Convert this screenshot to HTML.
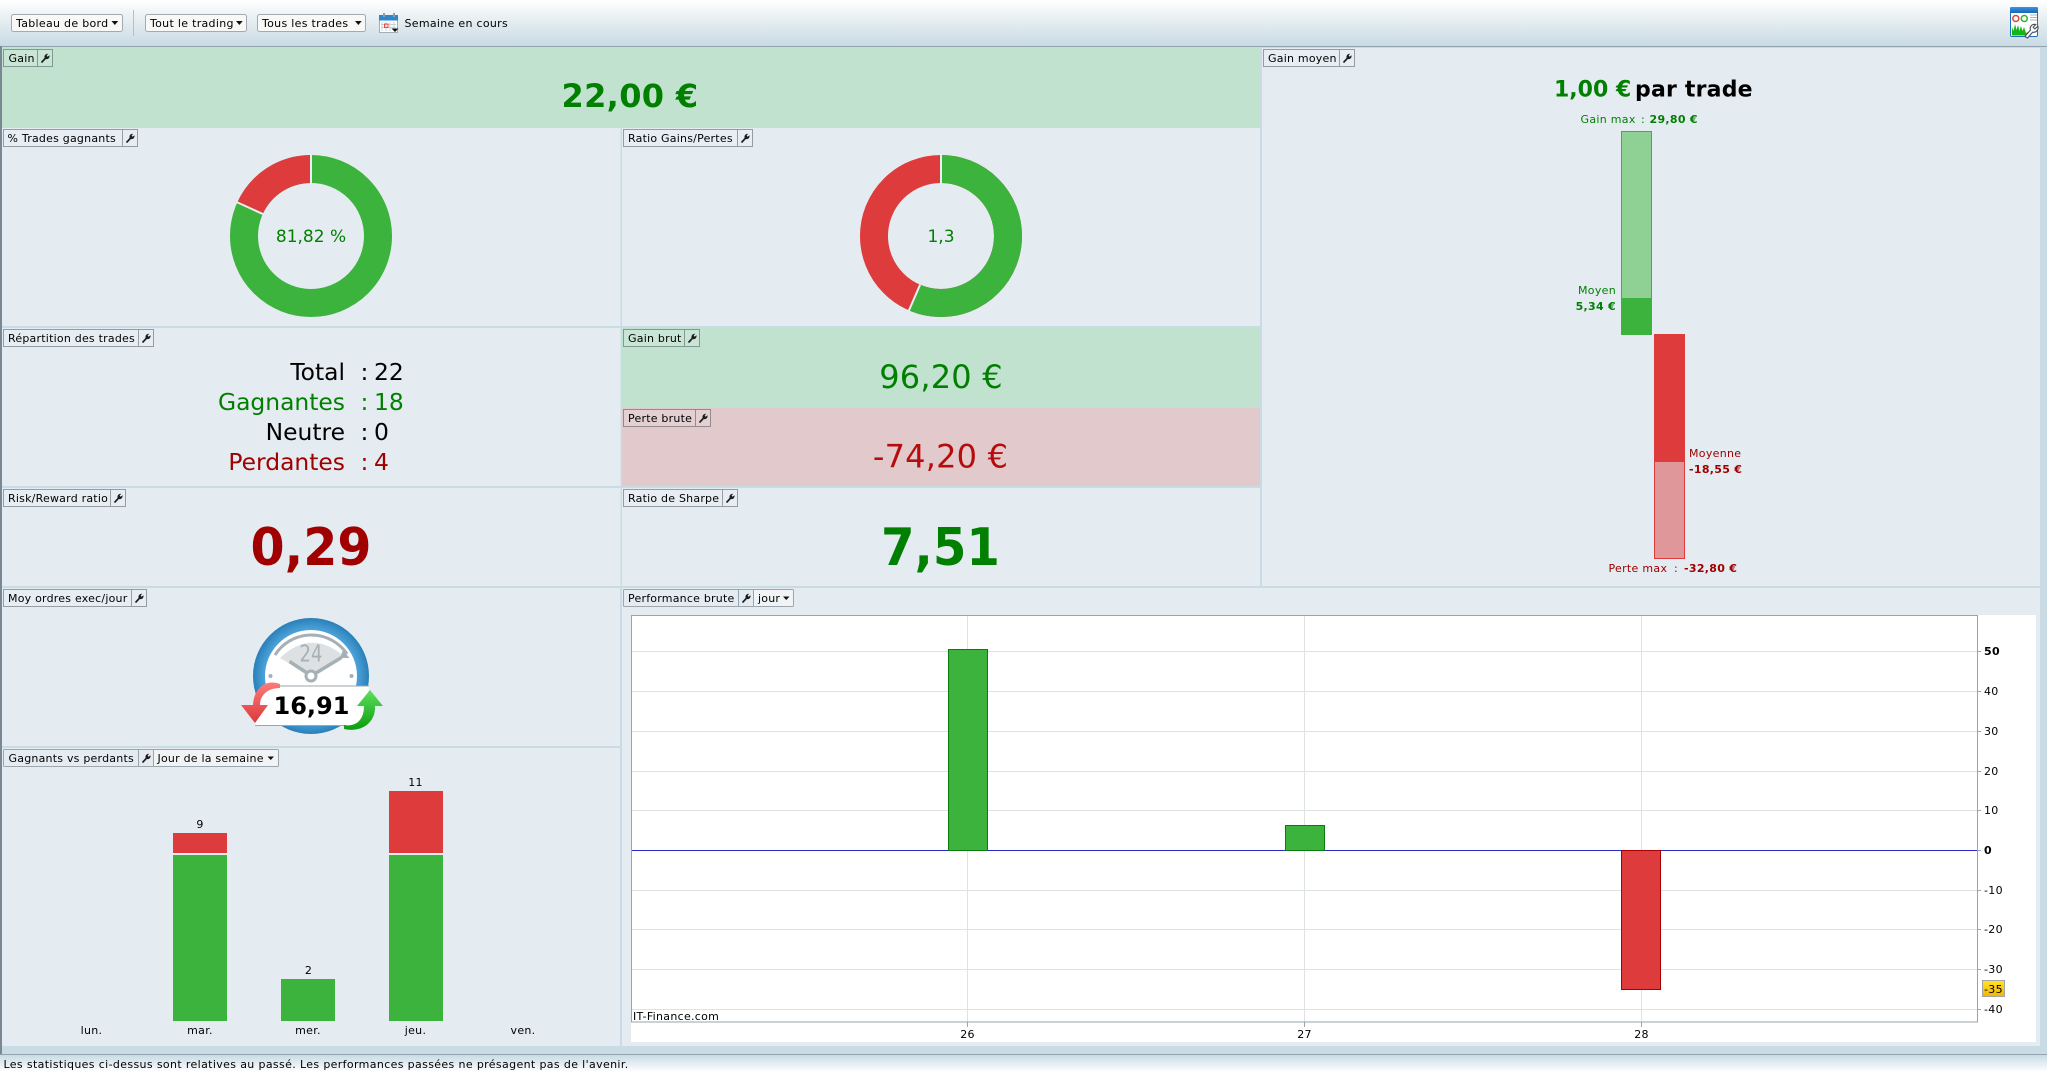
<!DOCTYPE html>
<html><head><meta charset="utf-8"><style>
html,body{margin:0;padding:0;background:#c9dbe5;width:2047px;height:1072px;overflow:hidden}
svg{display:block;position:absolute;left:0;top:0}
text{font-family:"DejaVu Sans","Liberation Sans",sans-serif;font-size:11px;fill:#000;letter-spacing:.3px}
.h{letter-spacing:.22px}
.b{font-weight:bold}.g{fill:#007f00}.r{fill:#a00000}
.m{text-anchor:middle}.e{text-anchor:end}
.n{letter-spacing:0}
.rp{font-size:23.4px;letter-spacing:0}
.hb{fill:rgba(255,255,255,.12);stroke:rgba(50,60,65,.45);stroke-width:1}
.hl{stroke:rgba(50,60,65,.45);stroke-width:1}
.dd{fill:#f1f4f6;stroke:#9ca6ac;stroke-width:1}
.gl{stroke:#dfe2e2;stroke-width:1}
.tk{stroke:#96a4ac;stroke-width:1}
</style></head><body>
<svg width="2047" height="1072" viewBox="0 0 2047 1072" xmlns="http://www.w3.org/2000/svg">
<defs>
<linearGradient id="top" x1="0" y1="0" x2="0" y2="1"><stop offset="0" stop-color="#fff"/><stop offset=".55" stop-color="#e0eaee"/><stop offset="1" stop-color="#c9dbe5"/></linearGradient>
<linearGradient id="bot" x1="0" y1="0" x2="0" y2="1"><stop offset="0" stop-color="#c9dbe5"/><stop offset="1" stop-color="#fff"/></linearGradient>
<linearGradient id="yel" x1="0" y1="0" x2="0" y2="1"><stop offset="0" stop-color="#ffe428"/><stop offset="1" stop-color="#f4b400"/></linearGradient>
<radialGradient id="ring" cx=".5" cy=".5" r=".5"><stop offset=".78" stop-color="#4fa6dc"/><stop offset="1" stop-color="#2a7fb8"/></radialGradient>
<linearGradient id="ra" x1="0" y1="0" x2="0" y2="1"><stop offset="0" stop-color="#ff7a7a"/><stop offset="1" stop-color="#dc3a3a"/></linearGradient>
<linearGradient id="ga" x1="0" y1="0" x2="0" y2="1"><stop offset="0" stop-color="#5fe05f"/><stop offset="1" stop-color="#0c9c0c"/></linearGradient>
<linearGradient id="blu" x1="0" y1="0" x2="0" y2="1"><stop offset="0" stop-color="#3d92e0"/><stop offset="1" stop-color="#1566b8"/></linearGradient>
<symbol id="w" viewBox="0 0 10 10"><path d="M.8 9 L4.6 4.9 C4 2.6 5.6 .6 8.2 .8 L6.6 2.6 L7.6 3.8 L9.5 2.2 C9.9 4.9 7.9 6.6 5.9 6 L2.2 10 Z" fill="#1c1c1c"/></symbol>
</defs>

<!-- frame -->
<rect x="0" y="0" width="2047" height="1072" fill="#c9dbe5"/>
<rect x="0" y="0" width="2047" height="46" fill="url(#top)"/>
<rect x="0" y="46" width="2047" height="1" fill="#93a3ad"/>
<rect x="0" y="46" width="2" height="1008" fill="#7a8893"/>
<rect x="0" y="1054" width="2047" height="1" fill="#93a3ad"/>
<rect x="0" y="1055" width="2047" height="17" fill="url(#bot)"/>

<!-- panels -->
<rect x="2" y="48" width="1258" height="79" fill="#c2e2d0"/>
<rect x="1262" y="48" width="778" height="538" fill="#e4ecf2"/>
<rect x="2" y="128" width="618.500" height="198" fill="#e4ecf2"/>
<rect x="622" y="128" width="638" height="198" fill="#e4ecf2"/>
<rect x="2" y="328" width="618.500" height="158" fill="#e4ecf2"/>
<rect x="622" y="328" width="638" height="109" fill="#c2e2d0"/>
<rect x="622" y="408" width="638" height="78" fill="#e1c9cc"/>
<rect x="2" y="488" width="618.500" height="98" fill="#e4ecf2"/>
<rect x="622" y="488" width="638" height="98" fill="#e4ecf2"/>
<rect x="2" y="588" width="618" height="158" fill="#e4ecf2"/>
<rect x="2" y="748" width="618" height="298" fill="#e4ecf2"/>
<rect x="622" y="588" width="1418" height="458" fill="#e4ecf2"/>

<!-- toolbar -->
<rect x="11.500" y="14.500" width="111" height="17" rx="2" fill="#f8f8f7" stroke="#a3abb0"/>
<text x="16" y="27">Tableau de bord</text><path d="M111.500 21h6.700l-3.350 4z" fill="#111"/>
<rect x="133" y="10" width="1" height="26" fill="#b4bfc6"/>
<rect x="145.500" y="14.500" width="101" height="17" rx="2" fill="#f8f8f7" stroke="#a3abb0"/>
<text x="150" y="27">Tout le trading</text><path d="M236 21h6.700l-3.350 4z" fill="#111"/>
<rect x="257.500" y="14.500" width="108" height="17" rx="2" fill="#f8f8f7" stroke="#a3abb0"/>
<text x="262" y="27">Tous les trades</text><path d="M355 21h6.700l-3.350 4z" fill="#111"/>
<!-- calendar -->
<rect x="379.500" y="15.500" width="18" height="17" fill="#fff" stroke="#a6aeb4"/>
<rect x="379" y="15" width="19" height="5.500" fill="#2f86cf"/>
<rect x="383" y="13" width="2" height="4" fill="#8aa0ad"/><rect x="393" y="13" width="2" height="4" fill="#8aa0ad"/>
<path d="M382 22v9M386 22v9M390 22v9M394 22v9M381 24.500h15M381 27.500h15" stroke="#c4d2dc" stroke-width="1" fill="none"/>
<rect x="384.500" y="24" width="3.500" height="3.500" fill="none" stroke="#e8483c"/>
<path d="M391.500 28.500h7l-3.500 3.500z" fill="#111"/>
<text x="404.500" y="27">Semaine en cours</text>
<!-- window icon -->
<rect x="2010.500" y="7.500" width="27" height="29" rx="1.500" fill="#fff" stroke="#1d6fc4"/>
<rect x="2010" y="7" width="28" height="6" rx="1.500" fill="url(#blu)"/>
<circle cx="2015.800" cy="18.500" r="3" fill="none" stroke="#e0403c" stroke-width="1.500"/>
<circle cx="2024.300" cy="18.500" r="3" fill="none" stroke="#2fb12f" stroke-width="1.500"/>
<path d="M2030 15h7M2030 17.500h7M2030 20h7" stroke="#a9b4bc"/>
<path d="M2012 35.500L2012 27 2013.500 31 2015 24 2016.500 30 2018 25 2019.500 31 2021 26 2022.500 31 2024 27 2026 33 2028 32V35.500Z" fill="#14b514"/>
<path d="M2024.800 36.500L2030.500 30C2029.300 26.800 2032 23.700 2035.800 24.400L2033.200 27.200 2034.800 29 2037.800 26.300C2038.900 30 2035.800 33 2032.600 32.200L2027.600 38Z" fill="#fff" stroke="#4a5258" stroke-width="1.100"/>

<!-- Gain -->
<rect class="hb" x="3.500" y="49.500" width="49" height="17"/><path class="hl" d="M37.500 50v16"/>
<text class="h" x="8.500" y="62">Gain</text><use href="#w" x="40" y="53" width="10" height="10"/>
<text class="b g m" x="630" y="107" style="font-size:32px;letter-spacing:.35px">22,00 €</text>

<!-- Gain moyen -->
<rect class="hb" x="1263.500" y="49.500" width="91" height="17"/><path class="hl" d="M1339.500 50v16"/>
<text class="h" x="1268" y="62">Gain moyen</text><use href="#w" x="1342" y="53" width="10" height="10"/>
<text class="b g n" x="1554" y="96.500" style="font-size:22px">1,00 €</text>
<text class="b" x="1635" y="96.500" style="font-size:22px;letter-spacing:.2px">par trade</text>
<text class="g" x="1580.500" y="123">Gain max</text><text class="g" x="1641" y="123">:</text><text class="g b" x="1649.500" y="123">29,80 €</text>
<rect x="1621" y="131" width="31" height="204" fill="#3cb33c"/>
<rect x="1622" y="132" width="29" height="166" fill="#8fd095"/>
<text class="g e" x="1616" y="294">Moyen</text>
<text class="g b e" x="1616" y="310">5,34 €</text>
<rect x="1654" y="334" width="31" height="225" fill="#de3c3c"/>
<rect x="1655" y="462" width="29" height="96" fill="#e09799"/>
<text class="r" x="1689" y="457">Moyenne</text>
<text class="r b" x="1689" y="473">-18,55 €</text>
<text class="r" x="1608.500" y="572">Perte max</text><text class="r" x="1674" y="572">:</text><text class="r b" x="1684" y="572">-32,80 €</text>

<!-- % trades gagnants -->
<rect class="hb" x="3.500" y="129.500" width="134" height="17"/><path class="hl" d="M122.500 130v16"/>
<text class="h" x="7.500" y="142">% Trades gagnants</text><use href="#w" x="125" y="133" width="10" height="10"/>
<circle cx="311" cy="236" r="67" fill="none" stroke="#3cb33c" stroke-width="28"/>
<circle cx="311" cy="236" r="67" fill="none" stroke="#de3c3c" stroke-width="28" pathLength="100" stroke-dasharray="18.18 81.82" transform="rotate(-155.450 311 236)"/>
<path d="M311 154V184M263.500 214.300L236.500 202" stroke="#e9eff3" stroke-width="2" fill="none"/>
<text class="g m n" x="311" y="242" style="font-size:17px">81,82 %</text>

<!-- ratio gains/pertes -->
<rect class="hb" x="623.500" y="129.500" width="129" height="17"/><path class="hl" d="M737.500 130v16"/>
<text class="h" x="628" y="142">Ratio Gains/Pertes</text><use href="#w" x="740" y="133" width="10" height="10"/>
<circle cx="941" cy="236" r="67" fill="none" stroke="#de3c3c" stroke-width="28"/>
<circle cx="941" cy="236" r="67" fill="none" stroke="#3cb33c" stroke-width="28" pathLength="100" stroke-dasharray="56.45 43.55" transform="rotate(-90 941 236)"/>
<path d="M941 154V184M920.100 284.700L908.700 311" stroke="#e9eff3" stroke-width="2" fill="none"/>
<text class="g m n" x="941" y="242" style="font-size:17px">1,3</text>

<!-- repartition -->
<rect class="hb" x="3.500" y="329.500" width="150" height="17"/><path class="hl" d="M138.500 330v16"/>
<text class="h" x="8" y="342">Répartition des trades</text><use href="#w" x="141" y="333" width="10" height="10"/>
<text class="e rp" x="345" y="380">Total</text><text class="rp" x="360.500" y="380">:</text><text class="rp" x="374" y="380">22</text>
<text class="e g rp" x="345" y="410">Gagnantes</text><text class="g rp" x="360.500" y="410">:</text><text class="g rp" x="374" y="410">18</text>
<text class="e rp" x="345" y="440">Neutre</text><text class="rp" x="360.500" y="440">:</text><text class="rp" x="374" y="440">0</text>
<text class="e r rp" x="345" y="470">Perdantes</text><text class="r rp" x="360.500" y="470">:</text><text class="r rp" x="374" y="470">4</text>

<!-- gain brut / perte brute -->
<rect class="hb" x="623.500" y="329.500" width="76" height="17"/><path class="hl" d="M684.500 330v16"/>
<text class="h" x="628" y="342">Gain brut</text><use href="#w" x="687" y="333" width="10" height="10"/>
<text class="g m" x="941" y="388" style="font-size:32px;letter-spacing:.2px">96,20 €</text>
<rect class="hb" x="623.500" y="409.500" width="87" height="17"/><path class="hl" d="M695.500 410v16"/>
<text class="h" x="628" y="422">Perte brute</text><use href="#w" x="698" y="413" width="10" height="10"/>
<text class="m" x="940.500" y="467.500" style="font-size:32px;letter-spacing:.2px;fill:#b80c0c">-74,20 €</text>

<!-- risk / sharpe -->
<rect class="hb" x="3.500" y="489.500" width="122" height="17"/><path class="hl" d="M110.500 490v16"/>
<text class="h" x="8" y="502">Risk/Reward ratio</text><use href="#w" x="113" y="493" width="10" height="10"/>
<text class="b r m n" x="311" y="565" textLength="121" lengthAdjust="spacingAndGlyphs" style="font-size:52px">0,29</text>
<rect class="hb" x="623.500" y="489.500" width="114" height="17"/><path class="hl" d="M722.500 490v16"/>
<text class="h" x="628" y="502">Ratio de Sharpe</text><use href="#w" x="725" y="493" width="10" height="10"/>
<text class="b g m n" x="940.500" y="565" textLength="119" lengthAdjust="spacingAndGlyphs" style="font-size:52px">7,51</text>

<!-- moy ordres -->
<rect class="hb" x="3.500" y="589.500" width="143" height="17"/><path class="hl" d="M131.500 590v16"/>
<text class="h" x="8" y="602">Moy ordres exec/jour</text><use href="#w" x="134" y="593" width="10" height="10"/>
<circle cx="311" cy="676" r="58" fill="url(#ring)"/>
<circle cx="311" cy="676" r="46" fill="#fff"/>
<path d="M280 658Q311 628 345 657L311 676Z" fill="#dde1e3"/>
<text class="m n" x="311" y="661.500" textLength="23" lengthAdjust="spacingAndGlyphs" style="font-size:23px;fill:#a6b0b5">24</text>
<path d="M275 655A43 43 0 0 1 347 654" fill="none" stroke="#a6b0b5" stroke-width="3"/>
<path d="M343 650L349.500 658 340 658Z" fill="#a6b0b5"/>
<path d="M289.500 661.500L307 673M341.500 657.500L316 673" stroke="#a6b0b5" stroke-width="3.500" fill="none"/>
<circle cx="311" cy="676" r="5" fill="#fff" stroke="#a6b0b5" stroke-width="3"/>
<circle cx="270.500" cy="676" r="2" fill="#a6b0b5"/><circle cx="351.500" cy="676" r="2" fill="#a6b0b5"/>
<path d="M262 686H369L365.500 725.500H255Z" fill="#fff"/>
<path d="M262 686H369M255 725.500H346" stroke="#9aa6ac" stroke-width="1" fill="none"/>
<path d="M280 684C268 679 254 686 253 705L241 705 255 723 268 705 260 705C260 695 268 688 280 688Z" fill="url(#ra)"/>
<path d="M344 725C356 727 364 720 364 706L357 706 370 690 383 706 375 706C376 722 362 733 344 729Z" fill="url(#ga)"/>
<text class="b m n" x="311.500" y="714" style="font-size:24px">16,91</text>

<!-- gagnants vs perdants -->
<rect class="dd" x="3.500" y="749.500" width="275" height="17" rx="1"/>
<rect x="4" y="750" width="134" height="16" fill="#e4ecf2"/><rect x="139" y="750" width="14" height="16" fill="#e4ecf2"/>
<path class="tk" d="M138.500 750v16M153.500 750v16"/>
<text class="h" x="8.500" y="762">Gagnants vs perdants</text><use href="#w" x="141" y="753" width="10" height="10"/>
<text class="h" x="157.500" y="762">Jour de la semaine</text><path d="M267.500 756.500h6.500l-3.250 3.500z" fill="#111"/>
<rect x="173" y="855" width="54" height="166" fill="#3cb33c"/><rect x="173" y="833" width="54" height="20" fill="#de3c3c"/>
<rect x="281" y="979" width="54" height="42" fill="#3cb33c"/>
<rect x="389" y="855" width="54" height="166" fill="#3cb33c"/><rect x="389" y="791" width="54" height="62" fill="#de3c3c"/>
<text class="m" x="200" y="828">9</text><text class="m" x="308.500" y="974">2</text><text class="m" x="415.500" y="786">11</text>
<text class="m" x="91.500" y="1034">lun.</text><text class="m" x="200" y="1034">mar.</text><text class="m" x="308" y="1034">mer.</text><text class="m" x="415.500" y="1034">jeu.</text><text class="m" x="523" y="1034">ven.</text>

<!-- performance -->
<rect class="dd" x="623.500" y="589.500" width="170" height="17" rx="1"/>
<rect x="624" y="590" width="114" height="16" fill="#e4ecf2"/><rect x="739" y="590" width="14" height="16" fill="#e4ecf2"/>
<path class="tk" d="M738.500 590v16M753.500 590v16"/>
<text class="h" x="628" y="602">Performance brute</text><use href="#w" x="741" y="593" width="10" height="10"/>
<text class="h" x="758" y="602">jour</text><path d="M783 596.500h6.500l-3.250 3.500z" fill="#111"/>
<rect x="631" y="615" width="1405" height="427" fill="#fff"/>
<path class="gl" d="M632 651.500H1977M632 691.500H1977M632 731.500H1977M632 771.500H1977M632 810.500H1977M632 890.500H1977M632 929.500H1977M632 969.500H1977M632 1009.500H1977"/>
<path class="gl" d="M967.500 616V1022M1304.500 616V1022M1641.500 616V1022"/>
<rect x="631.500" y="615.500" width="1346" height="406.500" fill="none" stroke="#96a4ac"/>
<path class="tk" d="M1977 651.500h4M1977 691.500h4M1977 731.500h4M1977 771.500h4M1977 810.500h4M1977 850.500h4M1977 890.500h4M1977 929.500h4M1977 969.500h4M1977 1009.500h4M967.500 1022v5M1304.500 1022v5M1641.500 1022v5"/>
<path d="M632 850.500H1977" stroke="#2a2ac8" stroke-width="1"/>
<rect x="948.500" y="649.500" width="39" height="201" fill="#3cb33c" stroke="#0a7a0a"/>
<rect x="1285.500" y="825.500" width="39" height="25" fill="#3cb33c" stroke="#0a7a0a"/>
<rect x="1621.500" y="850.500" width="39" height="139" fill="#de3c3c" stroke="#a80000"/>
<text x="633" y="1020">IT-Finance.com</text>
<text class="m" x="967.500" y="1038">26</text><text class="m" x="1304.500" y="1038">27</text><text class="m" x="1641.500" y="1038">28</text>
<text class="b" x="1984" y="655">50</text><text x="1984" y="695">40</text><text x="1984" y="735">30</text><text x="1984" y="775">20</text><text x="1984" y="814">10</text><text class="b" x="1984" y="854">0</text>
<text x="1984" y="894">-10</text><text x="1984" y="933">-20</text><text x="1984" y="973">-30</text><text x="1984" y="1013">-40</text>
<rect x="1982.500" y="980.500" width="22" height="16" fill="url(#yel)" stroke="#a2a8a0"/>
<text x="1984" y="993">-35</text>

<!-- status -->
<text x="3.500" y="1068" style="letter-spacing:.36px">Les statistiques ci-dessus sont relatives au passé. Les performances passées ne présagent pas de l'avenir.</text>
</svg>
</body></html>
